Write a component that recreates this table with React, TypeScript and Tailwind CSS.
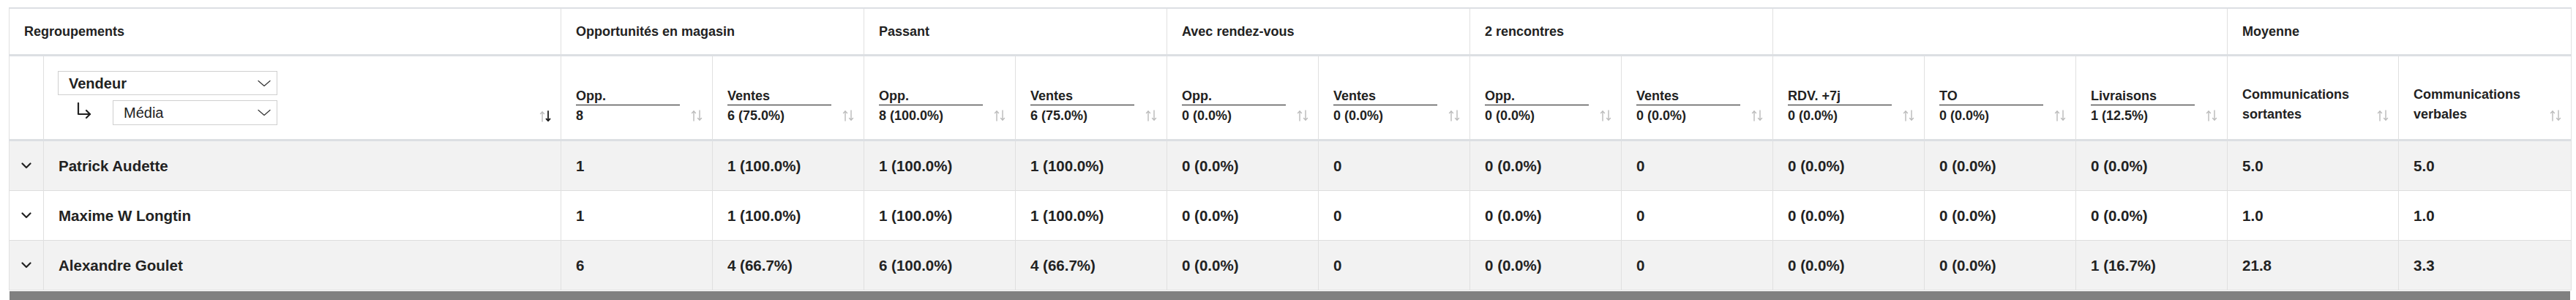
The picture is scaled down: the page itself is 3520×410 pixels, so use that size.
import React from "react";

type HeadCol = { label: string; value?: string; multi?: boolean };

const colWidths = [47, 707, 207, 207, 207, 207, 207, 207, 207, 207, 207, 207, 207, 234, 236];

const groups: { title: string; span: number }[] = [
    { title: "Opportunités en magasin", span: 2 },
    { title: "Passant", span: 2 },
    { title: "Avec rendez-vous", span: 2 },
    { title: "2 rencontres", span: 2 },
    { title: "", span: 3 },
    { title: "Moyenne", span: 2 },
];

const headCols: HeadCol[] = [
    { label: "Opp.", value: "8" },
    { label: "Ventes", value: "6 (75.0%)" },
    { label: "Opp.", value: "8 (100.0%)" },
    { label: "Ventes", value: "6 (75.0%)" },
    { label: "Opp.", value: "0 (0.0%)" },
    { label: "Ventes", value: "0 (0.0%)" },
    { label: "Opp.", value: "0 (0.0%)" },
    { label: "Ventes", value: "0 (0.0%)" },
    { label: "RDV. +7j", value: "0 (0.0%)" },
    { label: "TO", value: "0 (0.0%)" },
    { label: "Livraisons", value: "1 (12.5%)" },
    { label: "Communications sortantes", multi: true },
    { label: "Communications verbales", multi: true },
];

const rows: { name: string; values: string[] }[] = [
    {
        name: "Patrick Audette",
        values: ["1", "1 (100.0%)", "1 (100.0%)", "1 (100.0%)", "0 (0.0%)", "0", "0 (0.0%)", "0", "0 (0.0%)", "0 (0.0%)", "0 (0.0%)", "5.0", "5.0"],
    },
    {
        name: "Maxime W Longtin",
        values: ["1", "1 (100.0%)", "1 (100.0%)", "1 (100.0%)", "0 (0.0%)", "0", "0 (0.0%)", "0", "0 (0.0%)", "0 (0.0%)", "0 (0.0%)", "1.0", "1.0"],
    },
    {
        name: "Alexandre Goulet",
        values: ["6", "4 (66.7%)", "6 (100.0%)", "4 (66.7%)", "0 (0.0%)", "0", "0 (0.0%)", "0", "0 (0.0%)", "0 (0.0%)", "1 (16.7%)", "21.8", "3.3"],
    },
];

function SortIcon({ active = false }: { active?: boolean }) {
    return (
        <svg width="16" height="16" viewBox="0 0 16 16" fill="none" className="mb-[4px] shrink-0">
            <g stroke="#b9b9b9" strokeWidth="1.4" strokeLinecap="round" strokeLinejoin="round">
                <path d="M4 15V2" />
                <path d="M1.5 4.5L4 2l2.5 2.5" />
            </g>
            <g stroke={active ? "#1f1f1f" : "#b9b9b9"} strokeWidth={active ? "1.8" : "1.4"} strokeLinecap="round" strokeLinejoin="round">
                <path d="M12 1v13" />
                <path d="M9.5 11.5L12 14l2.5-2.5" />
            </g>
        </svg>
    );
}

function SelectChevron() {
    return (
        <svg width="18" height="10" viewBox="0 0 18 10" fill="none">
            <path d="M1 1.5l8 7 8-7" stroke="#333" strokeWidth="1.2" strokeLinecap="round" strokeLinejoin="round" />
        </svg>
    );
}

function ExpandChevron() {
    return (
        <svg width="14" height="9" viewBox="0 0 14 9" fill="none">
            <path d="M1.5 1.5L7 7l5.5-5.5" stroke="#222" strokeWidth="2.2" strokeLinecap="round" strokeLinejoin="round" />
        </svg>
    );
}

function SubArrow() {
    return (
        <svg width="22" height="22" viewBox="0 0 22 22" fill="none">
            <g stroke="#222" strokeWidth="2.2" strokeLinecap="round" strokeLinejoin="round">
                <path d="M3 1v15h16" />
                <path d="M14 11l5 5-5 5" />
            </g>
        </svg>
    );
}

export default function App() {
    return (
        <div className="bg-white pt-[10px] pl-[12px] text-[#222] font-['Liberation_Sans',Arial,sans-serif]">
            <table className="table-fixed border-collapse w-[3501px] text-left">
                <colgroup>
                    {colWidths.map((w, i) => (
                        <col key={i} style={{ width: w }} />
                    ))}
                </colgroup>
                <thead>
                    <tr className="border-t-2 border-t-[#dcdfe3] border-b-[3px] border-b-[#dcdfe3]">
                        <th colSpan={2} className="border-x border-x-[#e0e0e0] px-5 py-5 text-[18px] leading-[22px] font-bold">
                            Regroupements
                        </th>
                        {groups.map((g, i) => (
                            <th
                                key={i}
                                colSpan={g.span}
                                className="border-x border-x-[#e0e0e0] px-5 py-5 text-[18px] leading-[22px] font-bold"
                            >
                                {g.title}
                            </th>
                        ))}
                    </tr>
                    <tr className="border-b-[3px] border-b-[#dcdfe3]">
                        <th className="border-x border-x-[#e0e0e0]" />
                        <th className="border-x border-x-[#e0e0e0] pl-[19px] pr-[13px] pt-5 pb-[19px] align-bottom">
                            <div className="flex items-end justify-between">
                                <div className="flex flex-col gap-[7px] w-[300px] text-[20px]">
                                    <div className="h-[33px] border border-[#cfcfcf] flex items-center justify-between pl-[14px] pr-[8px] font-bold">
                                        Vendeur
                                        <SelectChevron />
                                    </div>
                                    <div className="flex items-center">
                                        <div className="w-[75px] pl-[25px] pb-[6px]">
                                            <SubArrow />
                                        </div>
                                        <div className="flex-1 h-[34px] border border-[#cfcfcf] flex items-center justify-between pl-[14px] pr-[8px] font-normal">
                                            Média
                                            <SelectChevron />
                                        </div>
                                    </div>
                                </div>
                                <SortIcon active />
                            </div>
                        </th>
                        {headCols.map((c, i) => (
                            <th
                                key={i}
                                className="border-x border-x-[#e0e0e0] pl-5 pr-[13px] pb-5 align-bottom text-[18px] font-bold"
                            >
                                <div className="flex items-end justify-between">
                                    {c.multi ? (
                                        <div className="leading-[27px] w-[150px]">{c.label}</div>
                                    ) : (
                                        <div className="w-[142px]">
                                            <div className="border-b border-b-[#1a1a1a] leading-[24px]">{c.label}</div>
                                            <div className="mt-[2px] leading-[24px]">{c.value}</div>
                                        </div>
                                    )}
                                    <SortIcon />
                                </div>
                            </th>
                        ))}
                    </tr>
                </thead>
                <tbody>
                    {rows.map((r, i) => (
                        <tr
                            key={r.name}
                            className={`border-b border-b-[#dedede] ${i % 2 === 0 ? "bg-[#f2f2f2]" : "bg-white"}`}
                        >
                            <td className="border-x border-x-[#e0e0e0] text-center">
                                <div className="flex justify-center">
                                    <ExpandChevron />
                                </div>
                            </td>
                            <td className="border-x border-x-[#e0e0e0] px-5 py-5 text-[20.5px] leading-[27px] font-bold">
                                {r.name}
                            </td>
                            {r.values.map((v, j) => (
                                <td
                                    key={j}
                                    className="border-x border-x-[#e0e0e0] px-5 py-5 text-[20.5px] leading-[27px] font-bold whitespace-nowrap"
                                >
                                    {v}
                                </td>
                            ))}
                        </tr>
                    ))}
                </tbody>
            </table>
            <div className="mt-[1px] ml-[1px] w-[3499px] h-[14px] bg-[#808080]" />
        </div>
    );
}
